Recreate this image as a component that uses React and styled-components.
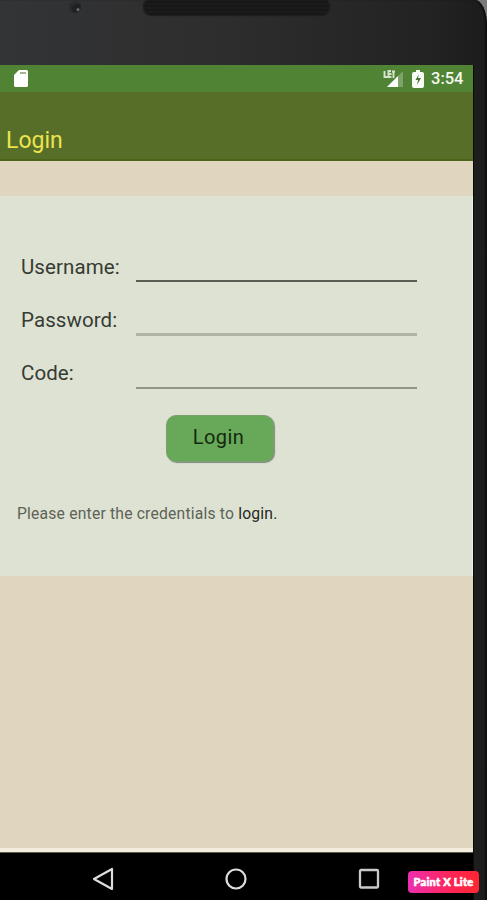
import React from 'react';
import styled, { createGlobalStyle } from 'styled-components';

const GlobalStyle = createGlobalStyle`
  * { box-sizing: border-box; }
  body { margin: 0; background: #77797a; font-family: Roboto, "Liberation Sans", sans-serif; }
`;

const Phone = styled.main`
  position: relative;
  width: 487px;
  height: 900px;
  overflow: hidden;
  display: flex;
  flex-direction: column;
  background: linear-gradient(90deg, #333436 0, #2d2d2d 230px, #222 440px, #1c1c1c 487px);
  border-top-right-radius: 12px 26px;
  box-shadow: inset -2px 0 1px #101010;
`;

const Bezel = styled.header`
  height: 65px;
  flex: none;
  display: flex;
  align-items: flex-start;
  padding-left: 69px;
`;

const Camera = styled.span`
  width: 12px;
  height: 12px;
  margin-top: 1px;
  border-radius: 50%;
  background: radial-gradient(circle at 75% 72%, #66696c 0 1px, #1f2022 2px 5px, #292a2c 7px);
`;

const Speaker = styled.span`
  width: 185px;
  height: 15px;
  margin-left: 63px;
  border-radius: 5px 5px 7px 7px;
  background: repeating-linear-gradient(0deg, #171717 0 2px, #1b1b1b 2px 4px);
  box-shadow: 0 0 1px 1px #1d1d1d;
`;

const Screen = styled.section`
  width: 474px;
  height: 835px;
  display: flex;
  flex-direction: column;
  background: #e0d5be;
  border-right: 1px solid #080b08;
`;

const StatusBar = styled.div`
  height: 27px;
  flex: none;
  display: flex;
  align-items: center;
  padding: 0 9px 0 14px;
  background: #508334;
  color: #f4f8f0;
`;

const StatusIcon = styled.svg`
  display: block;
  flex: none;
  margin-left: ${p => p.$left || '0'};
`;

const Clock = styled.time`
  width: 33px;
  margin-left: 7px;
  font-size: 16.5px;
  line-height: 27px;
  font-weight: 500;
  letter-spacing: 0;
  white-space: nowrap;
`;

const AppBar = styled.div`
  height: 69px;
  flex: none;
  padding: 34px 0 0 6px;
  background: #576e28;
  border-bottom: 2px solid #4b6415;
`;

const Title = styled.h1`
  margin: 0;
  color: #ece350;
  font-size: 23px;
  line-height: 30px;
  font-weight: 400;
`;

const Panel = styled.form`
  height: 380px;
  flex: none;
  margin-top: 35px;
  padding-top: 51px;
  display: flex;
  flex-direction: column;
  background: #dee2d3;
  border-right: 1px solid #edf0e5;
`;

const Field = styled.label`
  height: 53px;
  flex: none;
  display: grid;
  grid-template-columns: 115px 281px;
  padding-left: 21px;
`;

const FieldLabel = styled.span`
  padding-top: 8px;
  color: #363b34;
  font-size: 20.5px;
  line-height: 24px;
  letter-spacing: 0.08px;
  white-space: nowrap;
`;

const FieldInput = styled.input`
  width: 281px;
  height: ${p => p.$height};
  padding: 0;
  border: 0;
  outline: 0;
  border-radius: 0;
  background: transparent;
  border-bottom: ${p => p.$line};
  font: 18px Roboto, sans-serif;
`;

const LoginButton = styled.button`
  width: 108px;
  height: 47px;
  flex: none;
  margin: 9px 0 0 166px;
  padding: 0 3px 3px 0;
  border: 1px solid #7aa16c;
  border-radius: 10px;
  background: #68a859;
  box-shadow: 1px 1px 1px #828b80;
  color: #14290f;
  font: 20px/24px Roboto, sans-serif;
  letter-spacing: 0.45px;
`;

const Hint = styled.p`
  margin: 42px 0 0 17px;
  color: #5d6257;
  font-size: 15.7px;
  line-height: 20px;
  letter-spacing: 0.19px;
  white-space: nowrap;
`;

const HintEnd = styled.span`
  color: #252922;
`;

const NavBar = styled.nav`
  height: 52px;
  flex: none;
  margin-top: auto;
  border-top: 4px solid #f2eddd;
  background: #000;
  box-shadow: inset 0 1px #5c594f;
  display: grid;
  grid-template-columns: 133px 133px 133px;
  align-items: center;
  justify-content: start;
  padding: 6px 0 0 36px;
`;

const NavButton = styled.button`
  height: 28px;
  padding: 0;
  border: 0;
  background: none;
  display: flex;
  align-items: center;
  justify-content: center;
`;

const Badge = styled.div`
  position: absolute;
  left: 408px;
  top: 871px;
  width: 71px;
  height: 22px;
  border-radius: 4px;
  background: linear-gradient(90deg, #ed2faf, #ff2451 65%, #ff2732);
  color: #fff;
  font: 900 11px/22px Lato, sans-serif;
  letter-spacing: 0.25px;
  text-align: center;
  white-space: nowrap;
  -webkit-text-stroke: 0.6px #fff;
`;

const fields = [
  { label: 'Username:', type: 'text', height: '35px', line: '2px solid #5a5e54' },
  { label: 'Password:', type: 'password', height: '36px', line: '3px solid #b0b4a5' },
  { label: 'Code:', type: 'text', height: '36px', line: '2px solid #8e9584' },
];

export default function App() {
  return (
    <>
      <GlobalStyle />
      <Phone>
        <Bezel><Camera /><Speaker /></Bezel>
        <Screen>
          <StatusBar>
            <StatusIcon width="15" height="19" viewBox="0 0 15 19">
              <path d="M5 1h7.5Q14 1 14 2.5v14q0 1.5-1.5 1.5h-11Q0 18 0 16.5V6z" fill="#fff" />
              <path d="M6 4h6" stroke="#a4b592" strokeWidth="2" />
            </StatusIcon>
            <StatusIcon $left="auto" width="21" height="18" viewBox="0 0 21 18">
              <path d="M20 1v16H4z" fill="#7da468" />
              <path d="M15 6v11H4z" fill="#fff" />
              <path d="M1.5 1v6h3M8 1H5.5v6h3M5.5 4h3M9 1.5h3M10.5 1v7" fill="none" stroke="#d6e4ce" strokeWidth="1.9" />
            </StatusIcon>
            <StatusIcon $left="8px" width="12" height="18" viewBox="0 0 12 18">
              <path d="M4 0h4v2h2q2 0 2 2v12q0 2-2 2H2q-2 0-2-2V4q0-2 2-2h2z" fill="#f9fbf6" />
              <path d="M7 4L3.5 10H6l-1 5 4-7H6z" fill="#4f7139" />
            </StatusIcon>
            <Clock>3:54</Clock>
          </StatusBar>
          <AppBar><Title>Login</Title></AppBar>
          <Panel onSubmit={e => e.preventDefault()}>
            {fields.map(f => (
              <Field key={f.label}>
                <FieldLabel>{f.label}</FieldLabel>
                <FieldInput type={f.type} $height={f.height} $line={f.line} />
              </Field>
            ))}
            <LoginButton type="submit">Login</LoginButton>
            <Hint>Please enter the credentials to <HintEnd>login.</HintEnd></Hint>
          </Panel>
          <NavBar>
            <NavButton aria-label="Back">
              <svg width="24" height="26" viewBox="0 0 24 26"><path d="M21 3v20L3 13z" fill="none" stroke="#ddd" strokeWidth="2.2" strokeLinejoin="round" /></svg>
            </NavButton>
            <NavButton aria-label="Home">
              <svg width="24" height="24" viewBox="0 0 24 24"><circle cx="12" cy="12" r="9.5" fill="none" stroke="#ddd" strokeWidth="2.2" /></svg>
            </NavButton>
            <NavButton aria-label="Recent apps">
              <svg width="22" height="22" viewBox="0 0 22 22"><rect x="2" y="2" width="18" height="17.5" rx="1" fill="none" stroke="#c9c9c9" strokeWidth="2.3" /></svg>
            </NavButton>
          </NavBar>
        </Screen>
        <Badge>Paint X Lite</Badge>
      </Phone>
    </>
  );
}
